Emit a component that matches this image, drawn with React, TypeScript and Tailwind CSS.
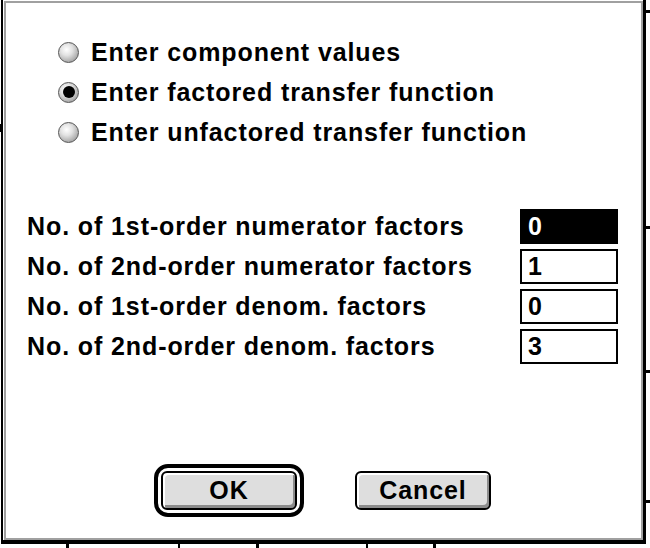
import React from "react";

const font = { fontFamily: '"Liberation Sans", Arial, sans-serif' };

function Radio({ checked }: { checked?: boolean }) {
  return (
    <div className="flex size-[21px] shrink-0 items-center justify-center rounded-full border border-[#555] bg-[radial-gradient(circle_at_40%_35%,#ffffff_0%,#e2e2e2_35%,#a8a8a8_75%,#6a6a6a_100%)]">
      {checked && <div className="size-[12px] rounded-full bg-black" />}
    </div>
  );
}

function Choice({ label, checked }: { label: string; checked?: boolean }) {
  return (
    <div className="flex h-[40px] items-center gap-[12px]">
      <Radio checked={checked} />
      <span className="text-[25px] font-bold leading-none tracking-[0.9px] text-black">
        {label}
      </span>
    </div>
  );
}

function Field({ label, value, active }: { label: string; value: string; active?: boolean }) {
  return (
    <div className="flex h-[35px] items-center justify-between pr-[23px]">
      <span className="text-[25px] font-bold leading-none tracking-[0.9px] text-black">
        {label}
      </span>
      <div
        className={
          active
            ? "flex h-[35px] w-[98px] items-center border-2 border-black bg-black pl-[6px] text-[25px] font-bold text-white"
            : "flex h-[35px] w-[98px] items-center border-2 border-black bg-white pl-[6px] text-[25px] font-bold text-black"
        }
      >
        {value}
      </div>
    </div>
  );
}

function Button({ children }: { children: React.ReactNode }) {
  return (
    <div className="flex h-[39px] w-[136px] items-center justify-center rounded-[6px] border-2 border-black bg-[#dedede] text-[25px] font-bold tracking-[0.9px] text-black shadow-[inset_2px_2px_0_#ffffff,inset_-2px_-3px_0_#8c8c8c]">
      {children}
    </div>
  );
}

export default function App() {
  return (
    <div className="relative h-[548px] w-[650px] overflow-hidden bg-white" style={font}>
      {/* bits of the window behind */}
      <div className="absolute left-0 top-[124px] h-[8px] w-[3px] bg-black" />
      <div className="absolute right-0 top-[10px] h-[3px] w-[4px] bg-black" />
      <div className="absolute right-0 top-[226px] h-[3px] w-[4px] bg-black" />
      <div className="absolute right-0 top-[370px] h-[3px] w-[4px] bg-black" />
      <div className="absolute right-0 top-[500px] h-[3px] w-[4px] bg-black" />
      <div className="absolute bottom-0 left-[66px] h-[4px] w-[3px] bg-black" />
      <div className="absolute bottom-0 left-[178px] h-[4px] w-[2px] bg-black" />
      <div className="absolute bottom-0 left-[256px] h-[4px] w-[3px] bg-black" />
      <div className="absolute bottom-0 left-[366px] h-[4px] w-[2px] bg-black" />
      <div className="absolute bottom-0 left-[433px] h-[4px] w-[3px] bg-black" />

      <div className="ml-[1px] h-[544px] w-[645px] border-b-4 border-l-2 border-r-[3px] border-black bg-white pl-[1px] pt-[1px]">
        <div className="flex h-[539px] w-[639px] flex-col border-2 border-[#a0a0a0] bg-white">
          <div className="flex flex-col pl-[52px] pt-[29px]">
            <Choice label="Enter component values" />
            <Choice label="Enter factored transfer function" checked />
            <Choice label="Enter unfactored transfer function" />
          </div>

          <div className="mt-[57px] flex flex-col gap-[5px] pl-[21px]">
            <Field label="No. of 1st-order numerator factors" value="0" active />
            <Field label="No. of 2nd-order numerator factors" value="1" />
            <Field label="No. of 1st-order denom. factors" value="0" />
            <Field label="No. of 2nd-order denom. factors" value="3" />
          </div>

          <div className="mt-[100px] flex items-center pl-[148px]">
            <div className="rounded-[14px] border-4 border-black p-[3px]">
              <Button>OK</Button>
            </div>
            <div className="ml-[51px]">
              <Button>Cancel</Button>
            </div>
          </div>
        </div>
      </div>
    </div>
  );
}
